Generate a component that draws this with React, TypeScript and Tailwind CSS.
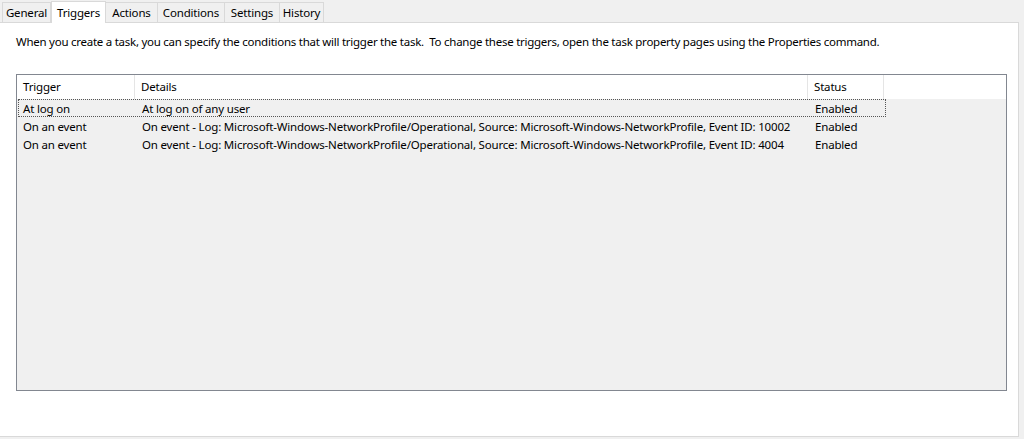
import React from "react";

const font = { fontFamily: '"Noto Sans", "Open Sans", sans-serif' };

export default function App() {
  const tabs = ["General", "Triggers", "Actions", "Conditions", "Settings", "History"];
  const widths = ["w-[49px]", "w-[55px]", "w-[52px]", "w-[67px]", "w-[55px]", "w-[44px]"];
  const rows = [
    ["At log on", "At log on of any user", "Enabled"],
    [
      "On an event",
      "On event - Log: Microsoft-Windows-NetworkProfile/Operational, Source: Microsoft-Windows-NetworkProfile, Event ID: 10002",
      "Enabled",
    ],
    [
      "On an event",
      "On event - Log: Microsoft-Windows-NetworkProfile/Operational, Source: Microsoft-Windows-NetworkProfile, Event ID: 4004",
      "Enabled",
    ],
  ];
  return (
    <div className="w-[1024px] h-[439px] bg-[#f0f0f0] text-[11.5px] tracking-[-0.18px] text-black overflow-hidden" style={font}>
      <div className="flex h-[22px] pl-[2px] items-end">
        {tabs.map((t, i) =>
          i === 1 ? (
            <div
              key={t}
              className={`${widths[i]} h-[22px] bg-white border-x border-t border-[#d9d9d9] flex justify-center pt-[2px] relative z-10 -mb-px`}
            >
              {t}
            </div>
          ) : (
            <div
              key={t}
              className={`${widths[i]} h-[20px] border-t border-r border-[#d9d9d9] ${i === 0 ? "border-l" : ""} flex justify-center items-center bg-[#f0f0f0]`}
            >
              {t}
            </div>
          )
        )}
      </div>
      <div className="w-[1019px] h-[415px] bg-white border border-[#d9d9d9] border-l-0 flex flex-col">
        <div className="pl-[16px] pt-[10px] h-[51px] tracking-[-0.26px]">
          When you create a task, you can specify the conditions that will trigger the task.&nbsp; To change these triggers, open the task property pages using the Properties command.
        </div>
        <div className="ml-[16px] w-[991px] h-[317px] border border-[#828790] bg-[#f0f0f0] flex flex-col">
          <div className="flex h-[24px] bg-white">
            <div className="w-[118px] pl-[6px] flex items-center border-r border-[#e5e5e5]">Trigger</div>
            <div className="w-[673px] pl-[6px] flex items-center border-r border-[#e5e5e5]">Details</div>
            <div className="w-[76px] pl-[6px] flex items-center border-r border-[#e5e5e5]">Status</div>
            <div className="flex-1" />
          </div>
          {rows.map((r, i) => (
            <div
              key={i}
              className={`flex h-[18px] w-[868px] ml-px border pt-px ${i === 0 ? "border-dotted border-[#555]" : "border-transparent"}`}
            >
              <div className="w-[117px] pl-[4px] flex items-center whitespace-nowrap">{r[0]}</div>
              <div className="w-[673px] pl-[6px] flex items-center whitespace-nowrap">{r[1]}</div>
              <div className="w-[76px] pl-[6px] flex items-center whitespace-nowrap">{r[2]}</div>
            </div>
          ))}
        </div>
      </div>
    </div>
  );
}
